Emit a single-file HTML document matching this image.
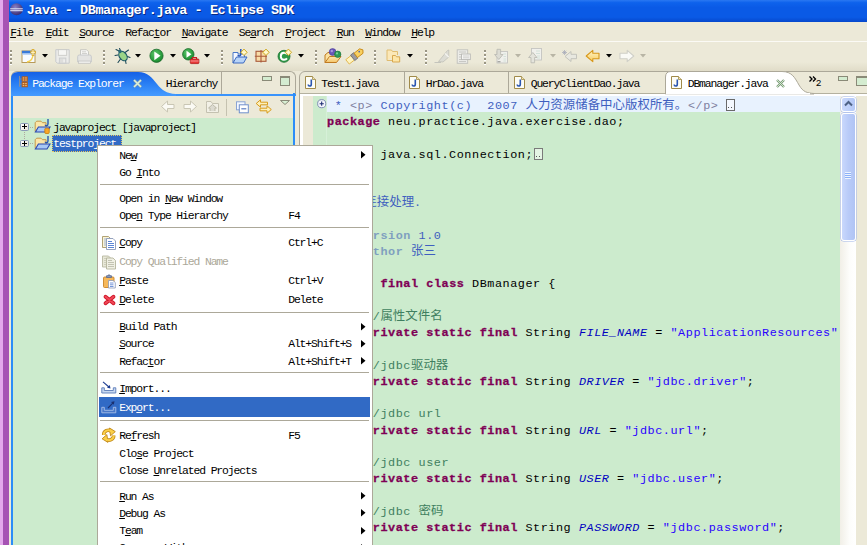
<!DOCTYPE html>
<html><head><meta charset="utf-8"><title>Java - DBmanager.java - Eclipse SDK</title>
<style>
html,body{margin:0;padding:0;}
body{width:867px;height:545px;overflow:hidden;position:relative;background:#ece9d8;font-family:"Liberation Mono","Noto Sans CJK SC",monospace;}
.a{position:absolute;}
.t{position:absolute;white-space:pre;font-family:"Liberation Mono","Noto Sans CJK SC",monospace;font-size:11.4px;letter-spacing:-1.12px;line-height:14px;color:#000;}
.c{position:absolute;white-space:pre;font-family:"Liberation Mono","Noto Sans CJK SC",monospace;font-size:11.8px;line-height:16px;color:#000;letter-spacing:0.552px;}
.c b{font-weight:bold;}
.k{color:#7f0055;font-weight:bold;-webkit-text-stroke:0.3px #7f0055;}
.s{color:#2a00ff;}
.f{color:#0000c0;font-style:italic;}
.g{color:#3f7f5f;}
.j{color:#3f5fbf;}
.jt{color:#7f9fbf;font-weight:bold;}
.jh{color:#7f7f9f;}
.cj{font-family:"Liberation Mono","Noto Sans CJK SC",monospace;font-size:12.45px;line-height:0;letter-spacing:0;}
u{text-decoration:underline;text-underline-offset:1px;}
svg{position:absolute;overflow:visible;}
</style></head>
<body>
<div class="a" style="left:0px;top:0px;width:3.2px;height:545px;background:#e3a9ec"></div>
<div class="a" style="left:3px;top:0px;width:5.9px;height:545px;background:#a653b4"></div>
<div class="a" style="left:8.8px;top:0px;width:859px;height:21.6px;background:linear-gradient(to bottom,#2a78f2 0%,#0e62ec 12%,#0a5ae6 35%,#0a5ae6 78%,#0648cc 100%)"></div>
<svg style="left:9.500px;top:2.700px" width="13" height="12.400" viewBox="0 0 13 12.400">
<defs><radialGradient id="eg" cx="0.4" cy="0.35" r="0.8"><stop offset="0" stop-color="#8a82c8"/><stop offset="1" stop-color="#2a1c60"/></radialGradient></defs>
<ellipse cx="6.500" cy="6.200" rx="6.300" ry="6" fill="url(#eg)"/>
<rect x="0.200" y="5.300" width="12.600" height="1" fill="#dfe6fa"/>
<rect x="0.200" y="7.200" width="12.600" height="1" fill="#dfe6fa"/>
</svg>
<div class="c" style="left:26.70px;top:3.10px;color:#fff;font-weight:bold;text-shadow:1px 1px 0 #0a2a80;font-size:13.5px;letter-spacing:-0.468px;">Java - DBmanager.java - Eclipse SDK</div>
<div class="a" style="left:8.8px;top:21.6px;width:859px;height:20px;background:#ece9d8"></div>
<div class="a" style="left:9px;top:41px;width:858px;height:1px;background:#fbfaf5"></div>
<div class="t" style="left:10.20px;top:25.50px;"><u>F</u>ile</div>
<div class="t" style="left:45.70px;top:25.50px;"><u>E</u>dit</div>
<div class="t" style="left:79.20px;top:25.50px;"><u>S</u>ource</div>
<div class="t" style="left:125.20px;top:25.50px;">Refac<u>t</u>or</div>
<div class="t" style="left:181.70px;top:25.50px;"><u>N</u>avigate</div>
<div class="t" style="left:238.70px;top:25.50px;">Se<u>a</u>rch</div>
<div class="t" style="left:285.20px;top:25.50px;"><u>P</u>roject</div>
<div class="t" style="left:336.70px;top:25.50px;"><u>R</u>un</div>
<div class="t" style="left:365.20px;top:25.50px;"><u>W</u>indow</div>
<div class="t" style="left:411.20px;top:25.50px;"><u>H</u>elp</div>
<div class="a" style="left:9px;top:62px;width:858px;height:9px;background:linear-gradient(to bottom,#ece9d8,#e0dcc8)"></div>
<div class="a" style="left:9.5px;top:50px;width:2px;height:15px;background:repeating-linear-gradient(to bottom,#9a9684 0,#9a9684 2px,#ffffff 2px,#ffffff 3px,transparent 3px,transparent 4px)"></div>
<div class="a" style="left:103.3px;top:50px;width:2px;height:15px;background:repeating-linear-gradient(to bottom,#9a9684 0,#9a9684 2px,#ffffff 2px,#ffffff 3px,transparent 3px,transparent 4px)"></div>
<div class="a" style="left:221.3px;top:50px;width:2px;height:15px;background:repeating-linear-gradient(to bottom,#9a9684 0,#9a9684 2px,#ffffff 2px,#ffffff 3px,transparent 3px,transparent 4px)"></div>
<div class="a" style="left:315.3px;top:50px;width:2px;height:15px;background:repeating-linear-gradient(to bottom,#9a9684 0,#9a9684 2px,#ffffff 2px,#ffffff 3px,transparent 3px,transparent 4px)"></div>
<div class="a" style="left:374px;top:50px;width:2px;height:15px;background:repeating-linear-gradient(to bottom,#9a9684 0,#9a9684 2px,#ffffff 2px,#ffffff 3px,transparent 3px,transparent 4px)"></div>
<div class="a" style="left:424.5px;top:50px;width:2px;height:15px;background:repeating-linear-gradient(to bottom,#9a9684 0,#9a9684 2px,#ffffff 2px,#ffffff 3px,transparent 3px,transparent 4px)"></div>
<div class="a" style="left:483.5px;top:50px;width:2px;height:15px;background:repeating-linear-gradient(to bottom,#9a9684 0,#9a9684 2px,#ffffff 2px,#ffffff 3px,transparent 3px,transparent 4px)"></div>
<svg style="left:42px;top:53.5px" width="6" height="3.5" viewBox="0 0 6 3.5"><path d="M0 0H6L3 3.5Z" fill="#000"/></svg>
<svg style="left:135px;top:53.5px" width="6" height="3.5" viewBox="0 0 6 3.5"><path d="M0 0H6L3 3.5Z" fill="#000"/></svg>
<svg style="left:170px;top:53.5px" width="6" height="3.5" viewBox="0 0 6 3.5"><path d="M0 0H6L3 3.5Z" fill="#000"/></svg>
<svg style="left:204px;top:53.5px" width="6" height="3.5" viewBox="0 0 6 3.5"><path d="M0 0H6L3 3.5Z" fill="#000"/></svg>
<svg style="left:298px;top:53.5px" width="6" height="3.5" viewBox="0 0 6 3.5"><path d="M0 0H6L3 3.5Z" fill="#000"/></svg>
<svg style="left:406.5px;top:53.5px" width="6" height="3.5" viewBox="0 0 6 3.5"><path d="M0 0H6L3 3.5Z" fill="#000"/></svg>
<svg style="left:605.5px;top:53.5px" width="6" height="3.5" viewBox="0 0 6 3.5"><path d="M0 0H6L3 3.5Z" fill="#000"/></svg>
<svg style="left:515px;top:53.5px" width="6" height="3.5" viewBox="0 0 6 3.5"><path d="M0 0H6L3 3.5Z" fill="#b8b5a5"/></svg>
<svg style="left:550px;top:53.5px" width="6" height="3.5" viewBox="0 0 6 3.5"><path d="M0 0H6L3 3.5Z" fill="#b8b5a5"/></svg>
<svg style="left:640px;top:53.5px" width="6" height="3.5" viewBox="0 0 6 3.5"><path d="M0 0H6L3 3.5Z" fill="#b8b5a5"/></svg>
<svg style="left:0;top:42px" width="867" height="30" viewBox="0 42 867 30"><defs><radialGradient id="gr" cx="0.4" cy="0.35" r="0.75"><stop offset="0" stop-color="#5cc46a"/><stop offset="0.7" stop-color="#259a3a"/><stop offset="1" stop-color="#16702a"/></radialGradient><linearGradient id="yl" x1="0" y1="0" x2="0" y2="1"><stop offset="0" stop-color="#fff4c8"/><stop offset="1" stop-color="#f8cc60"/></linearGradient><linearGradient id="fo" x1="0" y1="0" x2="0" y2="1"><stop offset="0" stop-color="#fde8b0"/><stop offset="1" stop-color="#f4c468"/></linearGradient></defs><rect x="22" y="51" width="13" height="11.500" fill="#f8fbff" stroke="#b89a58" stroke-width="1"/><rect x="22" y="50.800" width="13" height="2.700" fill="#3a7ad8"/><rect x="22" y="53.500" width="13" height="1.200" fill="#a8c8f4"/><path d="M27 62Q33 61 33 54" fill="none" stroke="#f4d050" stroke-width="1.400"/><path d="M33 49V56M30.200 52.300H35.800" stroke="#d8a828" stroke-width="2.600"/><path d="M33 49.800V55.200M31 52.300H35" stroke="#fff8d0" stroke-width="1"/><path d="M55.800 49.700H69.200V63.200H57.300L55.800 61.700Z" fill="#ececea" stroke="#c8cacc" stroke-width="1"/><rect x="58.300" y="49.700" width="8.400" height="5.600" fill="#f6f6f4" stroke="#c8c8c4" stroke-width="0.800"/><rect x="59.300" y="58" width="6.600" height="5.200" fill="#dededc" stroke="#c8cacc" stroke-width="0.800"/><rect x="63.300" y="59.300" width="1.600" height="3" fill="#f0f0ee"/><path d="M80.500 55V49.700H86.500L88.500 51.700V55" fill="#f6f6f4" stroke="#c4c4c0" stroke-width="0.900"/><path d="M82 51.800H86M82 53.500H87" stroke="#c8c8c4" stroke-width="0.800"/><path d="M77.700 62V56.500Q77.700 55 79.200 55H89.800Q91.300 55 91.300 56.500V62Z" fill="#e4e4e2" stroke="#c4c6c8" stroke-width="0.900"/><rect x="78.500" y="61" width="12" height="2.400" fill="#ececea" stroke="#c4c4c0" stroke-width="0.700"/><g stroke="#1d4a58" stroke-width="1.100" fill="none" stroke-linecap="round"><path d="M119 51L116 49.500M118 55L115 55.500M120.500 59L118 62.500M125 52.500L128.500 50M127.500 56.500L130 57.500M125.500 60.500L126 63.500M120.500 50.500L119.500 48.500"/></g><ellipse cx="123" cy="56" rx="3.600" ry="5.200" transform="rotate(-35 123 56)" fill="#9ad488" stroke="#1d5a68" stroke-width="1.200"/><circle cx="120" cy="51.500" r="1.700" fill="#2a6a78"/><circle cx="156.500" cy="55.800" r="6.600" fill="url(#gr)" stroke="#1a6a2a" stroke-width="0.800"/><path d="M154.300 51.500L160.500 55.800L154.300 60.200Z" fill="#fff"/><circle cx="188.300" cy="54.300" r="5.700" fill="url(#gr)" stroke="#1a6a2a" stroke-width="0.800"/><path d="M186.500 50.800L191.500 54.300L186.500 57.800Z" fill="#fff"/><path d="M192.500 59V57.500H196.500V59" fill="none" stroke="#c82020" stroke-width="1.100"/><rect x="190.300" y="59" width="8.600" height="4.600" rx="0.800" fill="#e83838" stroke="#b01818" stroke-width="0.800"/><path d="M190.500 61H198.700" stroke="#f8b0b0" stroke-width="0.800"/><path d="M233 60V52.500H238V54H244.500V57" fill="#f4f8ff" stroke="#4a78c8" stroke-width="1"/><path d="M233 63L236.500 57H247L243.500 63Z" fill="#b8d4f8" stroke="#3a68c0" stroke-width="1"/><path d="M233 60V63" stroke="#3a68c0"/><path d="M240.800 49V54.300Q240.800 56 239.200 56Q238 56 238 54.800" fill="none" stroke="#2a58b8" stroke-width="1.500"/><path d="M244 49.099999999999994L247.2 52.3L244 55.5L240.8 52.3Z" fill="#fdf0a8" stroke="#c8a018" stroke-width="0.9"/><path d="M244 50.3V54.3M242.0 52.3H246.0" stroke="#fffbe0" stroke-width="0.9"/><rect x="256" y="51.300" width="10" height="10" fill="#f8dca8" stroke="#a85a3a" stroke-width="1.100"/><path d="M261 50V62.500M254.800 56.300H267" stroke="#a85a3a" stroke-width="1.100"/><path d="M266 49.099999999999994L269.2 52.3L266 55.5L262.8 52.3Z" fill="#fdf0a8" stroke="#c8a018" stroke-width="0.9"/><path d="M266 50.3V54.3M264.0 52.3H268.0" stroke="#fffbe0" stroke-width="0.9"/><circle cx="284" cy="56.300" r="6" fill="#2e9a48" stroke="#1a7030" stroke-width="0.800"/><path d="M287 54.200Q286 52.800 284 52.800Q280.800 52.800 280.800 56.300Q280.800 59.800 284 59.800Q286 59.800 287 58.400" fill="none" stroke="#fff" stroke-width="1.900"/><path d="M288.4 49.099999999999994L291.59999999999997 52.3L288.4 55.5L285.2 52.3Z" fill="#fdf0a8" stroke="#c8a018" stroke-width="0.9"/><path d="M288.4 50.3V54.3M286.4 52.3H290.4" stroke="#fffbe0" stroke-width="0.9"/><path d="M325 62.500V55L328 52.500H338V55.500" fill="#fbe2a0" stroke="#c07a20" stroke-width="1"/><path d="M325 62.500L329.500 56.500H341L336.500 62.500Z" fill="url(#fo)" stroke="#c07a20" stroke-width="1"/><circle cx="332.600" cy="52" r="3.400" fill="#6a58b8" stroke="#4a3a98" stroke-width="0.600"/><circle cx="331.800" cy="51" r="1.200" fill="#a898e0"/><circle cx="337.700" cy="54.300" r="3.200" fill="#2e9a58" stroke="#1a7038" stroke-width="0.600"/><circle cx="337" cy="53.400" r="1.100" fill="#7ad098"/><g transform="rotate(-38 355 56)"><rect x="345.500" y="53.200" width="7" height="5.600" fill="#fff4c0" stroke="#e0b040" stroke-width="0.800"/><rect x="352" y="52.600" width="4" height="6.800" fill="#9a9aa0" stroke="#6a6a70" stroke-width="0.800"/><path d="M356 53.200H363L365 56L363 58.800H356Z" fill="#f8d060" stroke="#c88a18" stroke-width="0.900"/><circle cx="361" cy="55.200" r="0.800" fill="#3a58b8"/></g><path d="M387 60.500V50H391.500L392.500 51.500H397.500V55" fill="#fbe8b8" stroke="#e0bc70" stroke-width="1"/><path d="M387 60.500H392" stroke="#e0bc70"/><path d="M392.500 62V55.500H395.500L396.500 56.800H399.700V62Z" fill="#fde6a8" stroke="#d8a850" stroke-width="1"/><path d="M434.500 62.500H441" stroke="#c4c4bc" stroke-width="1"/><path d="M438.500 61.500L447.500 50.500L448.800 50V57L443 62Z" fill="#dcdcd4" stroke="#c0c0b8" stroke-width="0.800"/><path d="M445 53.500L448.800 57" stroke="#f4f4f0" stroke-width="1.200"/><rect x="457.200" y="49.800" width="10.500" height="13.500" fill="#ecece8" stroke="#c0c0bc" stroke-width="0.900"/><path d="M459 52H466M459 54.500H461M459 57H461M459 59.500H461M459 61.500H466" stroke="#c4c4c0" stroke-width="0.900"/><rect x="461.500" y="54" width="8.800" height="5.600" fill="#f4f4f2" stroke="#b8b8b4" stroke-width="0.900"/><path d="M463 56H469M463 57.800H469" stroke="#c8c8c4" stroke-width="0.800"/><rect x="497" y="51.500" width="10.500" height="11.500" fill="#f0f0ec" stroke="#c4c4c0" stroke-width="0.900"/><path d="M503.500 54H506M503.500 56.500H506M503.500 59H506M503.500 61H506" stroke="#cfe0d8" stroke-width="0.900"/><path d="M497 49.300H500.600V54.500H503L498.800 59.500L494.600 54.500H497Z" fill="#dcdcd4" stroke="#bcbcb4" stroke-width="0.900"/><rect x="497.500" y="61" width="3" height="1.400" fill="#a8a8a4"/><rect x="531.500" y="48.500" width="10" height="11.500" fill="#f0f0ec" stroke="#c4c4c0" stroke-width="0.900"/><path d="M536 51H540M536 53.500H540M537 56H540M537 58H540" stroke="#cfe0d8" stroke-width="0.900"/><path d="M531 62.800H534.600V57.500H537L532.800 52.500L528.600 57.500H531Z" fill="#e4e4dc" stroke="#bcbcb4" stroke-width="0.900"/><path d="M565 56.500L571 51.500V54.300H576.500V58.700H571V61.500Z" fill="#e8e8e0" stroke="#c0c0b8" stroke-width="0.900"/><path d="M562 52.500H567M564.500 50V55M562.800 50.800L566.200 54.200M566.200 50.800L562.800 54.200" stroke="#a4a8b8" stroke-width="0.700"/><path d="M586.200 56L592.800 50.300V53.300H599V58.700H592.800V61.700Z" fill="url(#yl)" stroke="#d8981a" stroke-width="1.100" stroke-linejoin="round"/><path d="M633.800 56L627.200 50.300V53.300H620V58.700H627.200V61.700Z" fill="#fafaf6" stroke="#d0d0c8" stroke-width="1.100" stroke-linejoin="round"/></svg>
<div class="a" style="left:11px;top:71px;width:283px;height:23px;border:1px solid #aca899;border-bottom:none;border-radius:6px 6px 0 0;background:#ece9d8"></div>
<div class="a" style="left:11px;top:94px;width:284.5px;height:2.4px;background:#3a94fc"></div>
<div class="a" style="left:11px;top:93px;width:2px;height:452px;background:#2b8df8"></div>
<div class="a" style="left:293px;top:93px;width:2px;height:452px;background:#2b8df8"></div>
<div class="a" style="left:13px;top:96px;width:280px;height:22.3px;background:#ece9d8"></div>
<div class="a" style="left:13px;top:117.5px;width:280px;height:0.8px;background:#d8d5c4"></div>
<div class="a" style="left:13px;top:118.3px;width:280px;height:427px;background:#ccebcd"></div>
<svg style="left:11px;top:71px" width="170" height="25" viewBox="0 0 170 25"><defs><linearGradient id="tg" x1="0" y1="0" x2="0" y2="1"><stop offset="0" stop-color="#1560e6"/><stop offset="0.5" stop-color="#2a80f4"/><stop offset="1" stop-color="#459bff"/></linearGradient></defs><path d="M0 25V8Q0 1 7 1H127C137 1 141 7 146 13S155 22.500 165 23V25Z" fill="url(#tg)"/></svg>
<div class="t" style="left:32.20px;top:76.50px;color:#fff">Package Explorer</div>
<div class="t" style="left:165.70px;top:76.50px;">Hierarchy</div>
<div class="a" style="left:220.5px;top:72px;width:1px;height:21.5px;background:#aca899"></div>
<svg style="left:17.500px;top:76px" width="10" height="12" viewBox="0 0 11 14"><path d="M1.5 0V12.5M1.5 3.5H4M1.5 9.5H4" stroke="#9a9288" stroke-width="1" fill="none"/><rect x="4.500" y="1" width="6" height="5" fill="#f0c080" stroke="#b05a18" stroke-width="1.200"/><rect x="4.500" y="7.500" width="6" height="5" fill="#f0c080" stroke="#b05a18" stroke-width="1.200"/><path d="M7.500 1V6M4.500 3.500H10.500M7.500 7.500V12.500M4.500 10H10.500" stroke="#b05a18" stroke-width="1"/></svg>
<svg style="left:133px;top:78.500px" width="9" height="9" viewBox="0 0 9 9"><path d="M1 1L8 8M8 1L1 8" stroke="#7a9ab8" stroke-width="2.800"/><path d="M1 1L8 8M8 1L1 8" stroke="#dcf0d8" stroke-width="1.600"/></svg>
<div class="a" style="left:262px;top:76px;width:8px;height:2.5px;border:1px solid #8a8a78;background:#d4ecd0"></div>
<div class="a" style="left:280px;top:76px;width:8px;height:7px;border:1px solid #8a8a78;border-top-width:2px;background:#d4ecd0"></div>
<svg style="left:160px;top:99px" width="132" height="16" viewBox="160 99 132 16"><path d="M161.5 106.5L167.5 101V104.5H174V108.5H167.5V112Z" fill="#fbfaf4" stroke="#c9c6b4" stroke-width="1"/><path d="M196.5 106.5L190.5 101V104.5H184V108.5H190.5V112Z" fill="#fbfaf4" stroke="#c9c6b4" stroke-width="1"/><path d="M206.5 103.5V101.5H211L212.5 103.5H218.5V112.5H206.5Z" fill="#f2f0e6" stroke="#c4c1b0" stroke-width="1"/><path d="M210 111V108H208.5L212.5 104.5L216.5 108H215V111" fill="#dcdad0" stroke="#b4b1a0" stroke-width="0.8"/><path d="M226.5 99V116" stroke="#c5c2b0" stroke-width="1"/><rect x="236.500" y="101.800" width="8.500" height="8" fill="#f4f8ff" stroke="#8aa4d4" stroke-width="1"/><rect x="239.300" y="104.800" width="9" height="8" fill="#ffffff" stroke="#7090cc" stroke-width="1"/><path d="M241.300 108.800H246.300" stroke="#5a7cc0" stroke-width="1.200"/><path d="M256.200 103.500L260.500 99.800V102.200H267.500V104.800H260.500V107.200Z" fill="#fdf0b8" stroke="#d89a1a" stroke-width="1"/><path d="M271.300 109.500L267 105.800V108.200H260V110.800H267V113.200Z" fill="#fdf0b8" stroke="#d89a1a" stroke-width="1"/><path d="M280.500 100.500H289.500L285 104.500Z" fill="#d8f0d4" stroke="#8a8a78" stroke-width="1"/></svg>
<div class="a" style="left:20.2px;top:123.10000000000001px;width:6.500px;height:5.800px;border:1px solid #8a9ab8;background:linear-gradient(135deg,#fff,#e8e4d8);border-radius:1.500px"></div>
<div class="a" style="left:22.0px;top:126.30000000000001px;width:5px;height:1.200px;background:#000"></div><div class="a" style="left:23.9px;top:124.4px;width:1.200px;height:5px;background:#000"></div>
<div class="a" style="left:20.2px;top:139.5px;width:6.500px;height:5.800px;border:1px solid #8a9ab8;background:linear-gradient(135deg,#fff,#e8e4d8);border-radius:1.500px"></div>
<div class="a" style="left:22.0px;top:142.70000000000002px;width:5px;height:1.200px;background:#000"></div><div class="a" style="left:23.9px;top:140.8px;width:1.200px;height:5px;background:#000"></div>
<div class="a" style="left:24px;top:132px;width:1px;height:7px;background:repeating-linear-gradient(to bottom,#b0a8a0 0,#b0a8a0 1px,transparent 1px,transparent 2px)"></div>
<div class="a" style="left:30px;top:126.500px;width:4px;height:1px;background:repeating-linear-gradient(to right,#b0a8a0 0,#b0a8a0 1px,transparent 1px,transparent 2px)"></div>
<div class="a" style="left:30px;top:143px;width:4px;height:1px;background:repeating-linear-gradient(to right,#b0a8a0 0,#b0a8a0 1px,transparent 1px,transparent 2px)"></div>
<svg style="left:33.5px;top:118px" width="17" height="16" viewBox="0 0 17 16"><path d="M1.200 13.500V4.700L2.700 3.200H7L8.500 4.700H12V9" fill="#fbe6a8" stroke="#c89848" stroke-width="1"/><path d="M1.400 14L4.400 9H16L13 14Z" fill="#a8c8f4" stroke="#2a48b0" stroke-width="1.100"/><path d="M14 1V6Q14 7.700 12.400 7.700Q11.300 7.700 11.200 6.700" fill="none" stroke="#2a58b0" stroke-width="1.400"/><rect x="10.800" y="10.200" width="4.400" height="5.300" rx="1" fill="#f8a828" stroke="#c87808" stroke-width="0.800"/></svg>
<svg style="left:33.5px;top:135px" width="17" height="16" viewBox="0 0 17 16"><path d="M1.200 13.500V4.700L2.700 3.200H7L8.500 4.700H12V9" fill="#fbe6a8" stroke="#c89848" stroke-width="1"/><path d="M1.400 14L4.400 9H16L13 14Z" fill="#a8c8f4" stroke="#2a48b0" stroke-width="1.100"/><path d="M14 1V6Q14 7.700 12.400 7.700Q11.300 7.700 11.200 6.700" fill="none" stroke="#2a58b0" stroke-width="1.400"/></svg>
<div class="t" style="left:53.20px;top:120.50px;">javaproject [javaproject]</div>
<div class="a" style="left:52px;top:135px;width:69.5px;height:16.5px;background:#316ac5;outline:1px dotted #e8c860;outline-offset:-1px"></div>
<div class="t" style="left:53.20px;top:136.50px;color:#fff">testproject</div>
<div class="a" style="left:299px;top:71px;width:580px;height:481px;border:1px solid #aca899;border-radius:6px 0 0 0;background:#ece9d8"></div>
<div class="a" style="left:300px;top:93px;width:567px;height:3px;background:#fff"></div>
<div class="a" style="left:300px;top:93px;width:2.5px;height:452px;background:#fff"></div>
<div class="a" style="left:300px;top:93px;width:567px;height:0.8px;background:#b4b19f"></div>
<div class="a" style="left:855px;top:96px;width:12px;height:449px;background:#ece9d8"></div>
<div class="a" style="left:302.5px;top:96px;width:10.5px;height:449px;background:#ece9d8"></div>
<div class="a" style="left:313px;top:96px;width:527px;height:449px;background:#ccebcd"></div>
<div class="a" style="left:326px;top:96px;width:1px;height:449px;background:#d6f0d8"></div>
<div class="a" style="left:327px;top:96px;width:513px;height:16.2px;background:#e8f2fe"></div>
<div class="a" style="left:840px;top:96px;width:15.5px;height:449px;background:linear-gradient(to right,#f1efe7,#fdfdfb 60%,#ffffff)"></div>
<div class="a" style="left:841px;top:97px;width:13px;height:12.500px;border:1px solid #fff;border-radius:3px;background:linear-gradient(to right,#c9d8fc,#b4c8f6);box-shadow:0 0 0 0.5px #9db3e8"></div>
<svg style="left:844px;top:100px" width="9" height="7" viewBox="0 0 9 7"><path d="M1 5.500L4.500 2L8 5.500" fill="none" stroke="#4d6185" stroke-width="2"/></svg>
<div class="a" style="left:841px;top:112.500px;width:13px;height:126px;border:1px solid #fff;border-radius:3px;background:linear-gradient(to right,#c9d8fc,#b9cbf8 50%,#b0c4f4);box-shadow:0 0 0 0.5px #9db3e8"></div>
<div class="a" style="left:845px;top:172px;width:6px;height:7px;background:repeating-linear-gradient(to bottom,#eef4fe 0,#eef4fe 1px,#8cb0f8 1px,#8cb0f8 2px)"></div>
<svg style="left:304.7px;top:76px" width="11" height="13" viewBox="0 0 11 13"><path d="M0.500 0.500H7.500L10.500 3.500V12.500H0.500Z" fill="#fdfdf6" stroke="#a08a4a" stroke-width="1"/><path d="M7.500 0.500V3.500H10.500" fill="#f0e4b0" stroke="#a08a4a" stroke-width="0.8"/><path d="M6.300 3.500V8.200Q6.300 10 4.600 10Q3.200 10 3.200 8.600" fill="none" stroke="#2a55b0" stroke-width="1.600"/></svg>
<div class="t" style="left:321.20px;top:76.50px;">Test1.java</div>
<div class="a" style="left:403.5px;top:72px;width:1px;height:21px;background:#aca899"></div>
<svg style="left:409.2px;top:76px" width="11" height="13" viewBox="0 0 11 13"><path d="M0.500 0.500H7.500L10.500 3.500V12.500H0.500Z" fill="#fdfdf6" stroke="#a08a4a" stroke-width="1"/><path d="M7.500 0.500V3.500H10.500" fill="#f0e4b0" stroke="#a08a4a" stroke-width="0.8"/><path d="M6.300 3.500V8.200Q6.300 10 4.600 10Q3.200 10 3.200 8.600" fill="none" stroke="#2a55b0" stroke-width="1.600"/></svg>
<div class="t" style="left:425.70px;top:76.50px;">HrDao.java</div>
<div class="a" style="left:508px;top:72px;width:1px;height:21px;background:#aca899"></div>
<svg style="left:514.2px;top:76px" width="11" height="13" viewBox="0 0 11 13"><path d="M0.500 0.500H7.500L10.500 3.500V12.500H0.500Z" fill="#fdfdf6" stroke="#a08a4a" stroke-width="1"/><path d="M7.500 0.500V3.500H10.500" fill="#f0e4b0" stroke="#a08a4a" stroke-width="0.8"/><path d="M6.300 3.500V8.200Q6.300 10 4.600 10Q3.200 10 3.200 8.600" fill="none" stroke="#2a55b0" stroke-width="1.600"/></svg>
<div class="t" style="left:530.70px;top:76.50px;">QueryClientDao.java</div>
<svg style="left:665px;top:71px" width="150" height="23" viewBox="0 0 150 23"><path d="M0.500 23V6Q0.500 0.500 6 0.500H117C127 0.500 130 7 134 14S142 22 149 22.500V23Z" fill="#fff" stroke="#aca899" stroke-width="1"/><rect x="1" y="22" width="144" height="1.500" fill="#fff"/></svg>
<svg style="left:671.2px;top:76px" width="11" height="13" viewBox="0 0 11 13"><path d="M0.500 0.500H7.500L10.500 3.500V12.500H0.500Z" fill="#fdfdf6" stroke="#a08a4a" stroke-width="1"/><path d="M7.500 0.500V3.500H10.500" fill="#f0e4b0" stroke="#a08a4a" stroke-width="0.8"/><path d="M6.300 3.500V8.200Q6.300 10 4.600 10Q3.200 10 3.200 8.600" fill="none" stroke="#2a55b0" stroke-width="1.600"/></svg>
<div class="t" style="left:687.70px;top:76.50px;">DBmanager.java</div>
<svg style="left:776px;top:79px" width="9" height="9" viewBox="0 0 9 9"><path d="M1 1L8 8M8 1L1 8" stroke="#7a9a78" stroke-width="2.300"/><path d="M1 1L8 8M8 1L1 8" stroke="#d8ecd4" stroke-width="0.900"/></svg>
<svg style="left:809px;top:76px" width="8" height="6" viewBox="0 0 8 6"><path d="M0.500 0.500L3 3L0.500 5.500M4 0.500L6.500 3L4 5.500" fill="none" stroke="#000" stroke-width="1.300"/></svg>
<div class="t" style="left:815.70px;top:76.50px;font-size:9.5px">2</div>
<div class="a" style="left:838px;top:76px;width:8px;height:2.500px;border:1px solid #8a8a78;background:#d4ecd0"></div>
<div class="a" style="left:855.500px;top:76px;width:12px;height:7px;border:1px solid #8a8a78;border-top-width:2px;background:#d4ecd0"></div>
<svg style="left:317.300px;top:98.600px" width="9.400" height="9.400" viewBox="0 0 9 9"><circle cx="4.500" cy="4.500" r="3.900" fill="#f4f6fc" stroke="#7a88b0" stroke-width="0.900"/><path d="M2.500 4.500H6.500M4.500 2.500V6.500" stroke="#1a2a70" stroke-width="1"/></svg>
<div class="c" style="left:327.00px;top:97.80px;"><span class="j"> * <span class="jh">&lt;p&gt;</span> Copyright(c)  2007 <span class="cj">人力资源储备中心版权所有。</span></span></div>
<div class="c" style="left:687.90px;top:97.80px;"><span class="jh">&lt;/p&gt;</span></div>
<div class="a" style="left:725.500px;top:98.7px;width:7px;height:10.500px;border:1px solid #6a6a6a;background:#f4f8fe"></div>
<div class="a" style="left:728px;top:107.2px;width:1px;height:1px;background:#555"></div><div class="a" style="left:730.500px;top:107.2px;width:1px;height:1px;background:#555"></div>
<div class="c" style="left:327.00px;top:114.04px;"><span class="k">package</span> neu.practice.java.exercise.dao;</div>
<div class="c" style="left:327.00px;top:146.52px;"><span class="k">import</span> java.sql.Connection;</div>
<div class="a" style="left:534.06px;top:147.92000000000002px;width:6.500px;height:10px;border:1px solid #7a7a7a;background:#e4f4e4"></div>
<div class="a" style="left:536.06px;top:156.42000000000002px;width:1px;height:1px;background:#555"></div><div class="a" style="left:538.56px;top:156.42000000000002px;width:1px;height:1px;background:#555"></div>
<div class="c" style="left:327.00px;top:179.00px;"><span class="j">/**</span></div>
<div class="c" style="left:327.00px;top:195.24px;"><span class="j"><span class="cj">数据库连接处理</span>.</span></div>
<div class="c" style="left:327.00px;top:211.48px;"><span class="j"> *</span></div>
<div class="c" style="left:327.00px;top:227.72px;"><span class="j"> * <span class="jt">@version</span> 1.0</span></div>
<div class="c" style="left:327.00px;top:243.96px;"><span class="j"> * <span class="jt">@author</span> <span class="cj">张三</span></span></div>
<div class="c" style="left:327.00px;top:260.20px;"><span class="j"> */</span></div>
<div class="c" style="left:327.00px;top:276.44px;"><span class="k">public</span> <span class="k">final</span> <span class="k">class</span> DBmanager {</div>
<div class="c" style="left:365.16px;top:308.92px;"><span class="g">//<span class="cj">属性文件名</span></span></div>
<div class="c" style="left:365.16px;top:325.16px;"><span class="k">private</span> <span class="k">static</span> <span class="k">final</span> String <span class="f">FILE_NAME</span> = <span class="s">"ApplicationResources"</span></div>
<div class="c" style="left:365.16px;top:357.64px;"><span class="g">//jdbc<span class="cj">驱动器</span></span></div>
<div class="c" style="left:365.16px;top:373.88px;"><span class="k">private</span> <span class="k">static</span> <span class="k">final</span> String <span class="f">DRIVER</span> = <span class="s">"jdbc.driver"</span>;</div>
<div class="c" style="left:365.16px;top:406.36px;"><span class="g">//jdbc url</span></div>
<div class="c" style="left:365.16px;top:422.60px;"><span class="k">private</span> <span class="k">static</span> <span class="k">final</span> String <span class="f">URL</span> = <span class="s">"jdbc.url"</span>;</div>
<div class="c" style="left:365.16px;top:455.08px;"><span class="g">//jdbc user</span></div>
<div class="c" style="left:365.16px;top:471.32px;"><span class="k">private</span> <span class="k">static</span> <span class="k">final</span> String <span class="f">USER</span> = <span class="s">"jdbc.user"</span>;</div>
<div class="c" style="left:365.16px;top:503.80px;"><span class="g">//jdbc <span class="cj">密码</span></span></div>
<div class="c" style="left:365.16px;top:520.04px;"><span class="k">private</span> <span class="k">static</span> <span class="k">final</span> String <span class="f">PASSWORD</span> = <span class="s">"jdbc.password"</span>;</div>
<div class="a" style="left:96.5px;top:144.5px;width:274.3px;height:420px;background:#fff;border:1px solid #aca899"></div>
<div class="a" style="left:100px;top:184.0px;width:269px;height:1px;background:#aca899"></div>
<div class="a" style="left:100px;top:227.0px;width:269px;height:1px;background:#aca899"></div>
<div class="a" style="left:100px;top:311.5px;width:269px;height:1px;background:#aca899"></div>
<div class="a" style="left:100px;top:372.2px;width:269px;height:1px;background:#aca899"></div>
<div class="a" style="left:100px;top:419.9px;width:269px;height:1px;background:#aca899"></div>
<div class="a" style="left:100px;top:480.8px;width:269px;height:1px;background:#aca899"></div>
<div class="t" style="left:119.20px;top:148.80px;color:#000">Ne<u>w</u></div>
<svg style="left:361px;top:151.3px" width="4.500" height="7.500" viewBox="0 0 4.500 7.500"><path d="M0 0L4.500 3.750L0 7.500Z" fill="#000"/></svg>
<div class="t" style="left:119.20px;top:166.00px;color:#000">Go <u>I</u>nto</div>
<div class="t" style="left:119.20px;top:191.70px;color:#000">Open in <u>N</u>ew Window</div>
<div class="t" style="left:119.20px;top:209.00px;color:#000">Ope<u>n</u> Type Hierarchy</div>
<div class="t" style="left:288.20px;top:209.00px;color:#000">F4</div>
<div class="t" style="left:119.20px;top:236.00px;color:#000"><u>C</u>opy</div>
<div class="t" style="left:288.20px;top:236.00px;color:#000">Ctrl+C</div>
<div class="t" style="left:119.20px;top:255.00px;color:#aca899">Copy Qualified Name</div>
<div class="t" style="left:119.20px;top:274.20px;color:#000"><u>P</u>aste</div>
<div class="t" style="left:288.20px;top:274.20px;color:#000">Ctrl+V</div>
<div class="t" style="left:119.20px;top:293.00px;color:#000"><u>D</u>elete</div>
<div class="t" style="left:288.20px;top:293.00px;color:#000">Delete</div>
<div class="t" style="left:119.20px;top:320.00px;color:#000"><u>B</u>uild Path</div>
<svg style="left:361px;top:322.5px" width="4.500" height="7.500" viewBox="0 0 4.500 7.500"><path d="M0 0L4.500 3.750L0 7.500Z" fill="#000"/></svg>
<div class="t" style="left:119.20px;top:337.30px;color:#000"><u>S</u>ource</div>
<div class="t" style="left:288.20px;top:337.30px;color:#000">Alt+Shift+S</div>
<svg style="left:361px;top:339.8px" width="4.500" height="7.500" viewBox="0 0 4.500 7.500"><path d="M0 0L4.500 3.750L0 7.500Z" fill="#000"/></svg>
<div class="t" style="left:119.20px;top:354.50px;color:#000">Refac<u>t</u>or</div>
<div class="t" style="left:288.20px;top:354.50px;color:#000">Alt+Shift+T</div>
<svg style="left:361px;top:357.0px" width="4.500" height="7.500" viewBox="0 0 4.500 7.500"><path d="M0 0L4.500 3.750L0 7.500Z" fill="#000"/></svg>
<div class="t" style="left:119.20px;top:381.60px;color:#000"><u>I</u>mport...</div>
<div class="a" style="left:99.2px;top:397px;width:270.5px;height:19.7px;background:#316ac5"></div>
<div class="t" style="left:119.20px;top:400.50px;color:#fff">Exp<u>o</u>rt...</div>
<div class="t" style="left:119.20px;top:428.50px;color:#000">Re<u>f</u>resh</div>
<div class="t" style="left:288.20px;top:428.50px;color:#000">F5</div>
<div class="t" style="left:119.20px;top:446.50px;color:#000">Clo<u>s</u>e Project</div>
<div class="t" style="left:119.20px;top:463.50px;color:#000">Close <u>U</u>nrelated Projects</div>
<div class="t" style="left:119.20px;top:489.50px;color:#000"><u>R</u>un As</div>
<svg style="left:361px;top:492.0px" width="4.500" height="7.500" viewBox="0 0 4.500 7.500"><path d="M0 0L4.500 3.750L0 7.500Z" fill="#000"/></svg>
<div class="t" style="left:119.20px;top:506.80px;color:#000"><u>D</u>ebug As</div>
<svg style="left:361px;top:509.29999999999995px" width="4.500" height="7.500" viewBox="0 0 4.500 7.500"><path d="M0 0L4.500 3.750L0 7.500Z" fill="#000"/></svg>
<div class="t" style="left:119.20px;top:524.00px;color:#000">T<u>e</u>am</div>
<svg style="left:361px;top:526.5px" width="4.500" height="7.500" viewBox="0 0 4.500 7.500"><path d="M0 0L4.500 3.750L0 7.500Z" fill="#000"/></svg>
<div class="t" style="left:119.20px;top:541.20px;color:#000">Comp<u>a</u>re With</div>
<svg style="left:361px;top:543.7px" width="4.500" height="7.500" viewBox="0 0 4.500 7.500"><path d="M0 0L4.500 3.750L0 7.500Z" fill="#000"/></svg>
<svg style="left:97px;top:230px" width="30" height="220" viewBox="97 230 30 220"><path d="M102.500 236.500H108.500L110.500 238.500V247.500H102.500Z" fill="#fbf4d8" stroke="#a89868" stroke-width="0.900"/><path d="M104 239H108M104 241H106M104 243H106M104 245H106" stroke="#7a98d0" stroke-width="0.700"/><path d="M106.500 238.500H113L115.500 241V249.500H106.500Z" fill="#fff" stroke="#8a98b8" stroke-width="0.900"/><path d="M108 241.500H112M108 243.500H114M108 245.500H114M108 247.500H114" stroke="#4a78d0" stroke-width="0.900"/><path d="M102.500 256H108.500L110.500 258V267H102.500Z" fill="#e8e8d8" stroke="#b8b8a0" stroke-width="0.900"/><path d="M104 258.500H108M104 260.500H106M104 262.500H106M104 264.500H106" stroke="#c4c4b0" stroke-width="0.700"/><path d="M106.500 258H113L115.500 260.500V269H106.500Z" fill="#f0f0e4" stroke="#b4b49c" stroke-width="0.900"/><path d="M108 260.500H112M108 262.500H114M108 264.500H114M108 266.500H114" stroke="#b8b8a4" stroke-width="0.800"/><rect x="103.500" y="277" width="10.500" height="10.500" rx="1" fill="#f6b85a" stroke="#c88428" stroke-width="0.900"/><path d="M106.500 277.500V275.800H108V275H110V275.800H111.500V277.500Z" fill="#8a9ab8" stroke="#5a6a90" stroke-width="0.800"/><path d="M108.500 280.500H113L115.300 282.500V288H108.500Z" fill="#fff" stroke="#8a98b8" stroke-width="0.800"/><path d="M110 283H113.500M110 284.800H113.500M110 286.500H113.500" stroke="#3a68c8" stroke-width="0.700"/><path d="M105.500 296.700L113.500 303.300M113.500 296.700L105.500 303.300" stroke="#d01828" stroke-width="3.800" stroke-linecap="round"/><path d="M105.500 296.700L113.500 303.300M113.500 296.700L105.500 303.300" stroke="#f04858" stroke-width="2" stroke-linecap="round"/><path d="M101.800 387.800V393H115.800V387.800H113.300V390.500H104.300V387.800Z" fill="#c8d8f0" stroke="#5a7ab8" stroke-width="0.900"/><path d="M103 381.800L109.500 387.500" stroke="#1a3a90" stroke-width="1.100"/><path d="M110.500 388.500L107 387.800L109.800 385Z" fill="#1a3a90"/><path d="M101.800 407.300V412.800H115.800V407.300H113.300V410.300H104.300V407.300Z" fill="#4a78c8" stroke="#a8c0e8" stroke-width="0.900"/><path d="M108 408L113.500 402.300" stroke="#1a3070" stroke-width="1.100"/><path d="M114.500 401.300L113.800 404.800L111 402Z" fill="#1a3070"/><g transform="translate(108.700 435.200)"><g><path d="M-5 -0.300A4.600 4.600 0 0 1 2.600 -3.800" fill="none" stroke="#c08818" stroke-width="3.600"/><path d="M0.800 -7.200L6.600 -3.600L1.800 0.600Z" fill="#fbd048" stroke="#c08818" stroke-width="0.900" stroke-linejoin="round"/><path d="M-5 -0.300A4.600 4.600 0 0 1 2.600 -3.800" fill="none" stroke="#fbd048" stroke-width="2"/></g><g transform="rotate(180)"><path d="M-5 -0.300A4.600 4.600 0 0 1 2.600 -3.800" fill="none" stroke="#c08818" stroke-width="3.600"/><path d="M0.800 -7.200L6.600 -3.600L1.800 0.600Z" fill="#fbd048" stroke="#c08818" stroke-width="0.900" stroke-linejoin="round"/><path d="M-5 -0.300A4.600 4.600 0 0 1 2.600 -3.800" fill="none" stroke="#fbd048" stroke-width="2"/></g></g></svg>
</body></html>
